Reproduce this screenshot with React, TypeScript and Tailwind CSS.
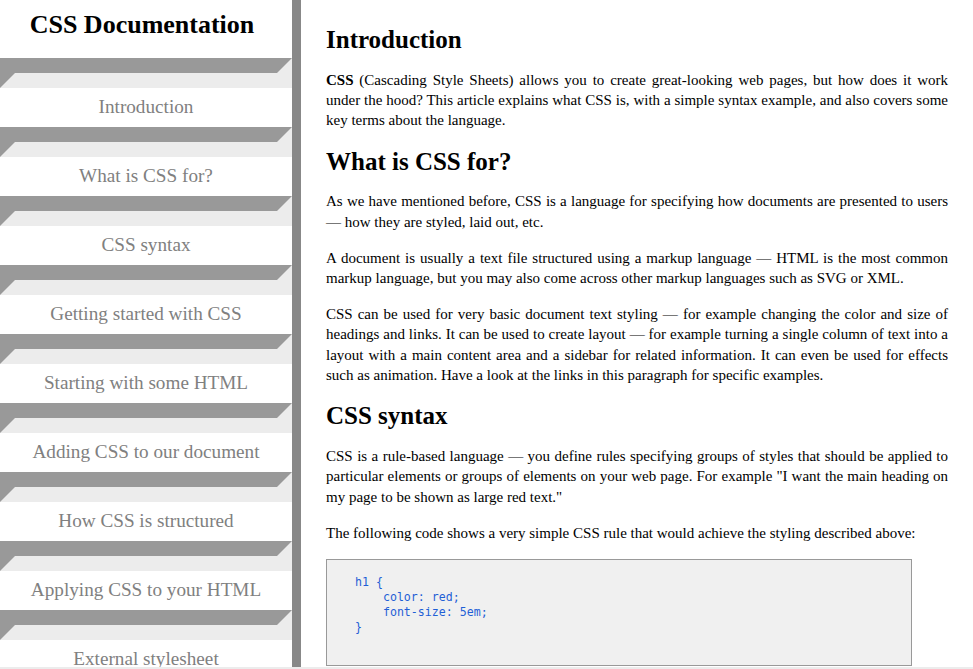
import React from "react";

const navItems = [
  "Introduction",
  "What is CSS for?",
  "CSS syntax",
  "Getting started with CSS",
  "Starting with some HTML",
  "Adding CSS to our document",
  "How CSS is structured",
  "Applying CSS to your HTML",
  "External stylesheet",
];

function NavItem({ label }: { label: string }) {
  return (
    <div>
      <div className="h-0 border-t-[15px] border-b-[15px] border-l-[15px] border-r-[15px] border-t-[#999999] border-l-[#999999] border-b-[#ececec] border-r-[#ececec]" />
      <div className="h-[39px] flex items-center justify-center pb-[2px] text-[19.2px] leading-[22px] text-[#808080] whitespace-nowrap">
        {label}
      </div>
    </div>
  );
}

export default function App() {
  const serif = { fontFamily: '"Liberation Serif", "Times New Roman", serif' };
  return (
    <div className="h-screen flex flex-col overflow-hidden bg-white text-black" style={serif}>
      <div className="flex flex-1 min-h-0">
        <nav className="w-[301px] shrink-0 border-r-[9px] border-r-[#888888] overflow-hidden">
          <header className="h-[58px] pt-[10px] text-center">
            <h1 className="text-[26px] leading-[30px] font-bold pr-[8px]">CSS Documentation</h1>
          </header>
          {navItems.map((n) => (
            <NavItem key={n} label={n} />
          ))}
        </nav>
        <main className="flex-1 min-w-0 overflow-hidden pt-[25px] px-[25px] text-[15px]">
          <section>
            <h2 className="text-[25px] leading-[29px] font-bold mb-[15.8px]">Introduction</h2>
            <p className="leading-[20.33px] text-justify mb-[15.67px]">
              <b>CSS</b> (Cascading Style Sheets) allows you to create great-looking web pages, but how does it work under the hood? This article explains what CSS is, with a simple syntax example, and also covers some key terms about the language.
            </p>
          </section>
          <section>
            <h2 className="text-[25px] leading-[29px] font-bold my-[15.8px]">What is CSS for?</h2>
            <p className="leading-[20.33px] text-justify mb-[15.67px]">
              As we have mentioned before, CSS is a language for specifying how documents are presented to users — how they are styled, laid out, etc.
            </p>
            <p className="leading-[20.33px] text-justify mb-[15.67px]">
              A document is usually a text file structured using a markup language — HTML is the most common markup language, but you may also come across other markup languages such as SVG or XML.
            </p>
            <p className="leading-[20.33px] text-justify mb-[15.67px]">
              CSS can be used for very basic document text styling — for example changing the color and size of headings and links. It can be used to create layout — for example turning a single column of text into a layout with a main content area and a sidebar for related information. It can even be used for effects such as animation. Have a look at the links in this paragraph for specific examples.
            </p>
          </section>
          <section>
            <h2 className="text-[25px] leading-[29px] font-bold my-[15.8px]">CSS syntax</h2>
            <p className="leading-[20.33px] text-justify mb-[15.67px]">
              CSS is a rule-based language — you define rules specifying groups of styles that should be applied to particular elements or groups of elements on your web page. For example "I want the main heading on my page to be shown as large red text."
            </p>
            <p className="leading-[20.33px] text-justify mb-[15.67px]">
              The following code shows a very simple CSS rule that would achieve the styling described above:
            </p>
            <pre
              className="w-[586px] h-[107px] border border-[#999999] bg-[#f0f0f0] pl-[28px] pt-[15px] text-[11.6px] leading-[15.3px] text-[#1f5fd6]"
              style={{ fontFamily: '"DejaVu Sans Mono", "Liberation Mono", monospace' }}
            >
{`h1 {
    color: red;
    font-size: 5em;
}`}
            </pre>
          </section>
        </main>
      </div>
      <div className="h-[2px] shrink-0 bg-[#ececec]" />
    </div>
  );
}
